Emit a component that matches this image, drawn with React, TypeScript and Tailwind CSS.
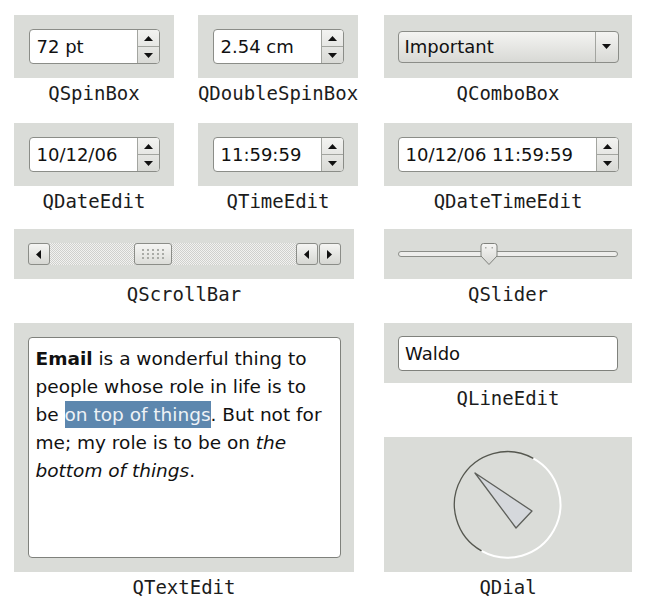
import React from 'react';

const sans = "font-['DejaVu_Sans','Liberation_Sans',sans-serif]";

const Up = () => (
  <svg width="9" height="5" viewBox="0 0 9 5">
    <path d="M0 5 L4.5 0 L9 5 Z" fill="#111" />
  </svg>
);

const Down = () => (
  <svg width="9" height="5" viewBox="0 0 9 5">
    <path d="M0 0 L4.5 5 L9 0 Z" fill="#111" />
  </svg>
);

const Left = () => (
  <svg width="5" height="9" viewBox="0 0 5 9">
    <path d="M5 0 L0 4.5 L5 9 Z" fill="#111" />
  </svg>
);

const Right = () => (
  <svg width="5" height="9" viewBox="0 0 5 9">
    <path d="M0 0 L5 4.5 L0 9 Z" fill="#111" />
  </svg>
);

const Label: React.FC<{ text: string }> = ({ text }) => (
  <div className="h-[30px] flex items-center justify-center text-[19px] text-[#1c1c1c] font-['DejaVu_Sans_Mono','Liberation_Mono',monospace]">
    {text}
  </div>
);

const SpinBox: React.FC<{ value: string; wide?: boolean }> = ({ value, wide }) => (
  <div
    className={`flex h-[35px] rounded-[4px] border border-[#8b8d88] bg-white overflow-hidden ${
      wide ? 'w-[221px]' : 'w-[131px]'
    }`}
  >
    <div className={`flex-1 flex items-center pl-[7px] text-[18px] text-[#111] ${sans}`}>{value}</div>
    <div className="w-[22px] flex flex-col border-l border-[#a3a5a0] bg-gradient-to-b from-[#f3f3f1] to-[#d9dad6]">
      <div className="flex-1 flex items-center justify-center border-b border-[#a3a5a0]">
        <Up />
      </div>
      <div className="flex-1 flex items-center justify-center">
        <Down />
      </div>
    </div>
  </div>
);

const ScrollButton: React.FC<{ children: React.ReactNode }> = ({ children }) => (
  <div className="w-[22px] h-full flex items-center justify-center rounded-[3px] border border-[#8b8d88] bg-gradient-to-b from-[#f5f5f3] to-[#d6d7d3]">
    {children}
  </div>
);

const App: React.FC = () => {
  return (
    <div className="w-[657px] h-[609px] bg-white pt-[15px] pl-[14px] flex gap-[26px]">
      {/* left block */}
      <div className="flex flex-col w-[344px]">
        <div className="flex gap-[24px] mb-[15px]">
          <div className="w-[160px]">
            <div className="h-[63px] bg-[#dadcd8] flex items-center justify-center">
              <SpinBox value="72 pt" />
            </div>
            <Label text="QSpinBox" />
          </div>
          <div className="w-[160px]">
            <div className="h-[63px] bg-[#dadcd8] flex items-center justify-center">
              <SpinBox value="2.54 cm" />
            </div>
            <Label text="QDoubleSpinBox" />
          </div>
        </div>

        <div className="flex gap-[24px] mb-[13px]">
          <div className="w-[160px]">
            <div className="h-[63px] bg-[#dadcd8] flex items-center justify-center">
              <SpinBox value="10/12/06" />
            </div>
            <Label text="QDateEdit" />
          </div>
          <div className="w-[160px]">
            <div className="h-[63px] bg-[#dadcd8] flex items-center justify-center">
              <SpinBox value="11:59:59" />
            </div>
            <Label text="QTimeEdit" />
          </div>
        </div>

        <div className="w-[340px] mb-[14px]">
          <div className="h-[50px] bg-[#dadcd8] flex items-center justify-center">
            <div className="w-[313px] h-[22px] flex">
              <ScrollButton>
                <Left />
              </ScrollButton>
              <div className="flex-1 h-full relative bg-[repeating-conic-gradient(#cfd0cd_0_25%,#f2f2f0_0_50%)] bg-[length:2px_2px]">
                <div className="absolute left-[84px] top-0 w-[38px] h-full rounded-[3px] border border-[#8b8d88] bg-gradient-to-b from-[#f5f5f3] to-[#dcddd9] flex items-center justify-center">
                  <div className="grid grid-cols-5 gap-x-[3px] gap-y-[2px]">
                    {Array.from({ length: 15 }).map((_, i) => (
                      <div key={i} className="w-[2px] h-[2px] bg-[#a9aba6]" />
                    ))}
                  </div>
                </div>
              </div>
              <ScrollButton>
                <Left />
              </ScrollButton>
              <div className="w-[1px]" />
              <ScrollButton>
                <Right />
              </ScrollButton>
            </div>
          </div>
          <Label text="QScrollBar" />
        </div>

        <div className="w-[340px]">
          <div className="h-[249px] bg-[#dadcd8] flex items-center justify-center">
            <div
              className={`w-[313px] h-[221px] rounded-[4px] border border-[#7f817c] bg-white pl-[7px] pt-[7px] text-[18.5px] leading-[28px] text-[#111] whitespace-nowrap ${sans}`}
            >
              <b>Email</b> is a wonderful thing to
              <br />
              people whose role in life is to
              <br />
              be <span className="bg-[#5d87ae] text-[#eef2f6] py-[3px]">on top of things</span>. But not for
              <br />
              me; my role is to be on <i>the</i>
              <br />
              <i>bottom of things</i>.
            </div>
          </div>
          <Label text="QTextEdit" />
        </div>
      </div>

      {/* right column */}
      <div className="flex flex-col w-[248px]">
        <div className="mb-[15px]">
          <div className="h-[63px] bg-[#dadcd8] flex items-center justify-center">
            <div className="w-[221px] h-[32px] flex rounded-[4px] border border-[#8b8d88] bg-gradient-to-b from-[#f4f4f2] to-[#d8d9d5]">
              <div className={`flex-1 flex items-center pl-[6px] text-[18px] text-[#111] ${sans}`}>Important</div>
              <div className="w-[23px] flex items-center justify-center border-l border-[#a3a5a0]">
                <Down />
              </div>
            </div>
          </div>
          <Label text="QComboBox" />
        </div>

        <div className="mb-[13px]">
          <div className="h-[63px] bg-[#dadcd8] flex items-center justify-center">
            <SpinBox value="10/12/06 11:59:59" wide />
          </div>
          <Label text="QDateTimeEdit" />
        </div>

        <div className="mb-[14px]">
          <div className="h-[50px] bg-[#dadcd8] flex items-center justify-center">
            <div className="w-[220px] h-[22px] relative flex items-center">
              <div className="w-full h-[6px] rounded-full border border-[#8b8d88] bg-[#eeeeec]" />
              <svg className="absolute left-[82px] top-0" width="18" height="22" viewBox="0 0 18 22">
                <defs>
                  <linearGradient id="hg" x1="0" y1="0" x2="0" y2="1">
                    <stop offset="0" stopColor="#f6f6f4" />
                    <stop offset="1" stopColor="#d6d7d3" />
                  </linearGradient>
                </defs>
                <path
                  d="M3.5 0.5 H14.5 Q17 0.5 17 3 V13 L9 21.5 L1 13 V3 Q1 0.5 3.5 0.5 Z"
                  fill="url(#hg)"
                  stroke="#7f817c"
                />
                <rect x="5" y="4" width="1.5" height="1.5" fill="#a9aba6" />
                <rect x="11.5" y="4" width="1.5" height="1.5" fill="#a9aba6" />
              </svg>
            </div>
          </div>
          <Label text="QSlider" />
        </div>

        <div className="mb-[24px]">
          <div className="h-[60px] bg-[#dadcd8] flex items-center justify-center">
            <div
              className={`w-[220px] h-[35px] rounded-[4px] border border-[#7f817c] bg-white flex items-center pl-[6px] text-[18px] text-[#111] ${sans}`}
            >
              Waldo
            </div>
          </div>
          <Label text="QLineEdit" />
        </div>

        <div>
          <div className="h-[135px] bg-[#dadcd8]">
            <svg width="248" height="135" viewBox="0 0 248 135">
              <path d="M149.3 21.4 A53 53 0 1 1 97.5 113.9" fill="none" stroke="#ffffff" strokeWidth="2" />
              <path d="M97.5 113.9 A53 53 0 0 1 149.3 21.4" fill="none" stroke="#55574f" strokeWidth="1.3" />
              <path d="M91 36 L148 74 L132 91 Z" fill="#d5d8dc" stroke="#5d5f5a" strokeWidth="1.3" strokeLinejoin="round" />
            </svg>
          </div>
          <Label text="QDial" />
        </div>
      </div>
    </div>
  );
};

export default App;
